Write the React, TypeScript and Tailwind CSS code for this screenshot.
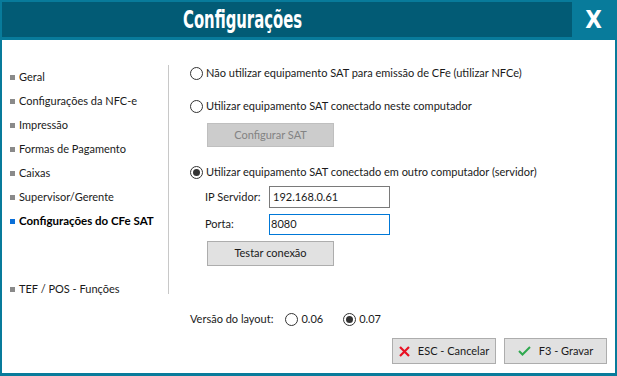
import React from "react";

const menu = [
  "Geral",
  "Configurações da NFC-e",
  "Impressão",
  "Formas de Pagamento",
  "Caixas",
  "Supervisor/Gerente",
];

const Radio = ({ checked = false }: { checked?: boolean }) => (
  <span className="flex h-[13px] w-[13px] shrink-0 items-center justify-center rounded-full border border-[#333333] bg-white">
    {checked && <span className="h-[7px] w-[7px] rounded-full bg-[#333333]" />}
  </span>
);

const MenuItem = ({ label, active = false }: { label: string; active?: boolean }) => (
  <div className="flex h-[24px] items-center whitespace-nowrap">
    <span className={`ml-[8px] mr-[4px] h-[5px] w-[5px] shrink-0 ${active ? "bg-[#0a6fd8]" : "bg-[#8a8a8a]"}`} />
    <span className={active ? "text-[11.5px] font-bold text-black" : "text-[#1a1a1a]"}>{label}</span>
  </div>
);

export default function App() {
  return (
    <div
      className="flex h-[376px] w-[617px] flex-col bg-[#087b9b] px-[2px] pb-[3px] pt-[2px] text-[11px] text-[#1a1a1a]"
      style={{ fontFamily: 'Lato, "Liberation Sans", sans-serif' }}
    >
      {/* Title bar */}
      <div className="flex h-[35px] shrink-0">
        <div className="flex flex-1 items-center bg-[#025b75] pl-[181px]">
          <span
            className="origin-left scale-x-[0.66] text-[25px] font-bold leading-none text-white"
            style={{ fontFamily: '"DejaVu Sans Condensed", "DejaVu Sans", sans-serif' }}
          >
            Configurações
          </span>
        </div>
        <div className="flex w-[43px] items-center justify-center">
          <span
            className="text-[24px] font-bold leading-none text-white"
            style={{ fontFamily: '"DejaVu Sans Condensed", "DejaVu Sans", sans-serif' }}
          >
            X
          </span>
        </div>
      </div>

      {/* Body */}
      <div className="mt-[3px] flex flex-1 flex-col bg-white">
        <div className="mt-[25px] flex">
          {/* Sidebar */}
          <div className="h-[229px] w-[167px] shrink-0 border-r border-[#c8c8c8]">
            {menu.map((m) => (
              <MenuItem key={m} label={m} />
            ))}
            <MenuItem label="Configurações do CFe SAT" active />
            <div className="h-[44px]" />
            <MenuItem label="TEF / POS - Funções" />
          </div>

          {/* Main */}
          <div className="flex flex-col whitespace-nowrap pl-[21px]">
            <label className="flex h-[16px] items-center gap-[3px]">
              <Radio />
              <span>Não utilizar equipamento SAT para emissão de CFe (utilizar NFCe)</span>
            </label>
            <label className="mt-[17px] flex h-[16px] items-center gap-[3px]">
              <Radio />
              <span>Utilizar equipamento SAT conectado neste computador</span>
            </label>
            <button className="ml-[17px] mt-[9px] h-[24px] w-[127px] border border-[#bfbfbf] bg-[#cccccc] text-[#838383]">
              Configurar SAT
            </button>
            <label className="mt-[17px] flex h-[16px] items-center gap-[3px]">
              <Radio checked />
              <span>Utilizar equipamento SAT conectado em outro computador (servidor)</span>
            </label>
            <div className="ml-[15px] mt-[6px] flex items-center">
              <span className="w-[64px]">IP Servidor:</span>
              <div className="flex h-[22px] w-[121px] items-center border border-[#7a7a7a] px-[3px]">192.168.0.61</div>
            </div>
            <div className="ml-[15px] mt-[6px] flex items-center">
              <span className="w-[64px]">Porta:</span>
              <div className="flex h-[21px] w-[121px] items-center border border-[#0078d7] px-[1px]">8080</div>
            </div>
            <button className="ml-[17px] mt-[6px] h-[25px] w-[127px] border border-[#adadad] bg-[#e1e1e1]">
              Testar conexão
            </button>
          </div>
        </div>

        {/* Layout version */}
        <div className="ml-[188px] mt-[17px] flex h-[16px] items-center">
          <span className="mr-[12px]">Versão do layout:</span>
          <Radio />
          <span className="ml-[3px]">0.06</span>
          <span className="ml-[20px]" />
          <Radio checked />
          <span className="ml-[3px]">0.07</span>
        </div>

        {/* Footer buttons */}
        <div className="mt-[11px] flex justify-end gap-[8px] pr-[8px]">
          <button className="flex h-[26px] w-[104px] items-center justify-center gap-[8px] border border-[#adadad] bg-[#e1e1e1]">
            <svg width="11" height="11" viewBox="0 0 11 11">
              <path d="M1 1L10 10M10 1L1 10" stroke="#e81123" strokeWidth="2.2" />
            </svg>
            <span>ESC - Cancelar</span>
          </button>
          <button className="flex h-[26px] w-[103px] items-center justify-center gap-[8px] border border-[#adadad] bg-[#e1e1e1]">
            <svg width="13" height="10" viewBox="0 0 13 10">
              <path d="M1 5L4.5 8.5L12 1" fill="none" stroke="#2fa84f" strokeWidth="2" />
            </svg>
            <span>F3 - Gravar</span>
          </button>
        </div>
      </div>
    </div>
  );
}
